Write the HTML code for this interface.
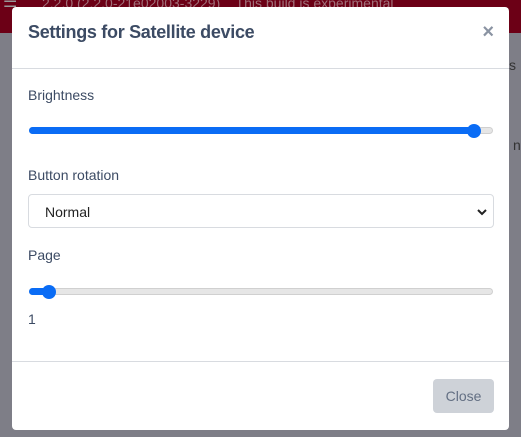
<!DOCTYPE html>
<html><head><style>
body{margin:0;width:521px;height:437px;overflow:hidden;background:#7e7e87;font-family:"Liberation Sans",sans-serif;position:relative}
.top{position:absolute;left:0;top:0;width:521px;height:33px;background:#6c0016;color:#a0707a;font-size:14px}
.modal{position:absolute;left:12px;top:7px;width:497px;height:423px;background:#fff;border-radius:4px;color:#3c4b64}
.hd{height:61px;border-bottom:1px solid #d8dbe0;position:relative}
.title{position:absolute;left:16px;top:15px;font-size:18px;font-weight:bold;color:#3c4b64;letter-spacing:-0.3px}
.x{position:absolute;right:15px;top:14px;font-size:20px;font-weight:bold;color:#8a93a2}
.lbl{position:absolute;left:16px;font-size:14px}
.track{position:absolute;left:17px;width:464px;height:7px;border-radius:4px;background:#e6e6e6;border:1px solid #d0d0d0;box-sizing:border-box}
.fill{position:absolute;left:17px;height:7px;border-radius:4px;background:#0a6cf5}
.thumb{position:absolute;width:14px;height:14px;border-radius:50%;background:#0a6cf5}
.sel{position:absolute;left:16px;top:187px;width:466px;height:34px;border:1px solid #d8dbe0;border-radius:4px;box-sizing:border-box;font-size:14px;padding:9px 0 0 16px;color:#222}
.ft{position:absolute;left:0;top:354px;width:497px;border-top:1px solid #d8dbe0}
.btn{position:absolute;left:421px;top:372px;width:61px;height:34px;background:#ced2d8;border-radius:4px;color:#636f83;font-size:14px;text-align:center;line-height:34px}
</style></head><body>
<div class="top"><span style="position:absolute;left:3px;top:-8px;color:#999;font-size:16px">☰</span><span style="position:absolute;left:42px;top:-5px">2.2.0 (2.2.0-21e02003-3229) &nbsp;&nbsp; This build is experimental</span></div>
<div style="position:absolute;left:509px;top:57px;font-size:14px;color:#333">s</div>
<div style="position:absolute;left:513px;top:137px;font-size:14px;color:#333">n</div>
<div class="modal">
<div class="hd"><div class="title">Settings for Satellite device</div><div class="x">×</div></div>
<div class="lbl" style="top:80px">Brightness</div>
<div class="track" style="top:120px"></div>
<div class="fill" style="top:120px;width:448px"></div>
<div class="thumb" style="left:455px;top:117px"></div>
<div class="lbl" style="top:160px">Button rotation</div>
<div class="sel">Normal<svg style="position:absolute;right:6px;top:13px" width="10" height="8" viewBox="0 0 10 8"><path d="M1 2l4 4 4-4" stroke="#222" stroke-width="2" fill="none"/></svg></div>
<div class="lbl" style="top:240px">Page</div>
<div class="track" style="top:281px"></div>
<div class="fill" style="top:281px;width:20px"></div>
<div class="thumb" style="left:30px;top:278px"></div>
<div class="lbl" style="top:304px">1</div>
<div class="ft"></div>
<div class="btn">Close</div>
</div>
</body></html>
